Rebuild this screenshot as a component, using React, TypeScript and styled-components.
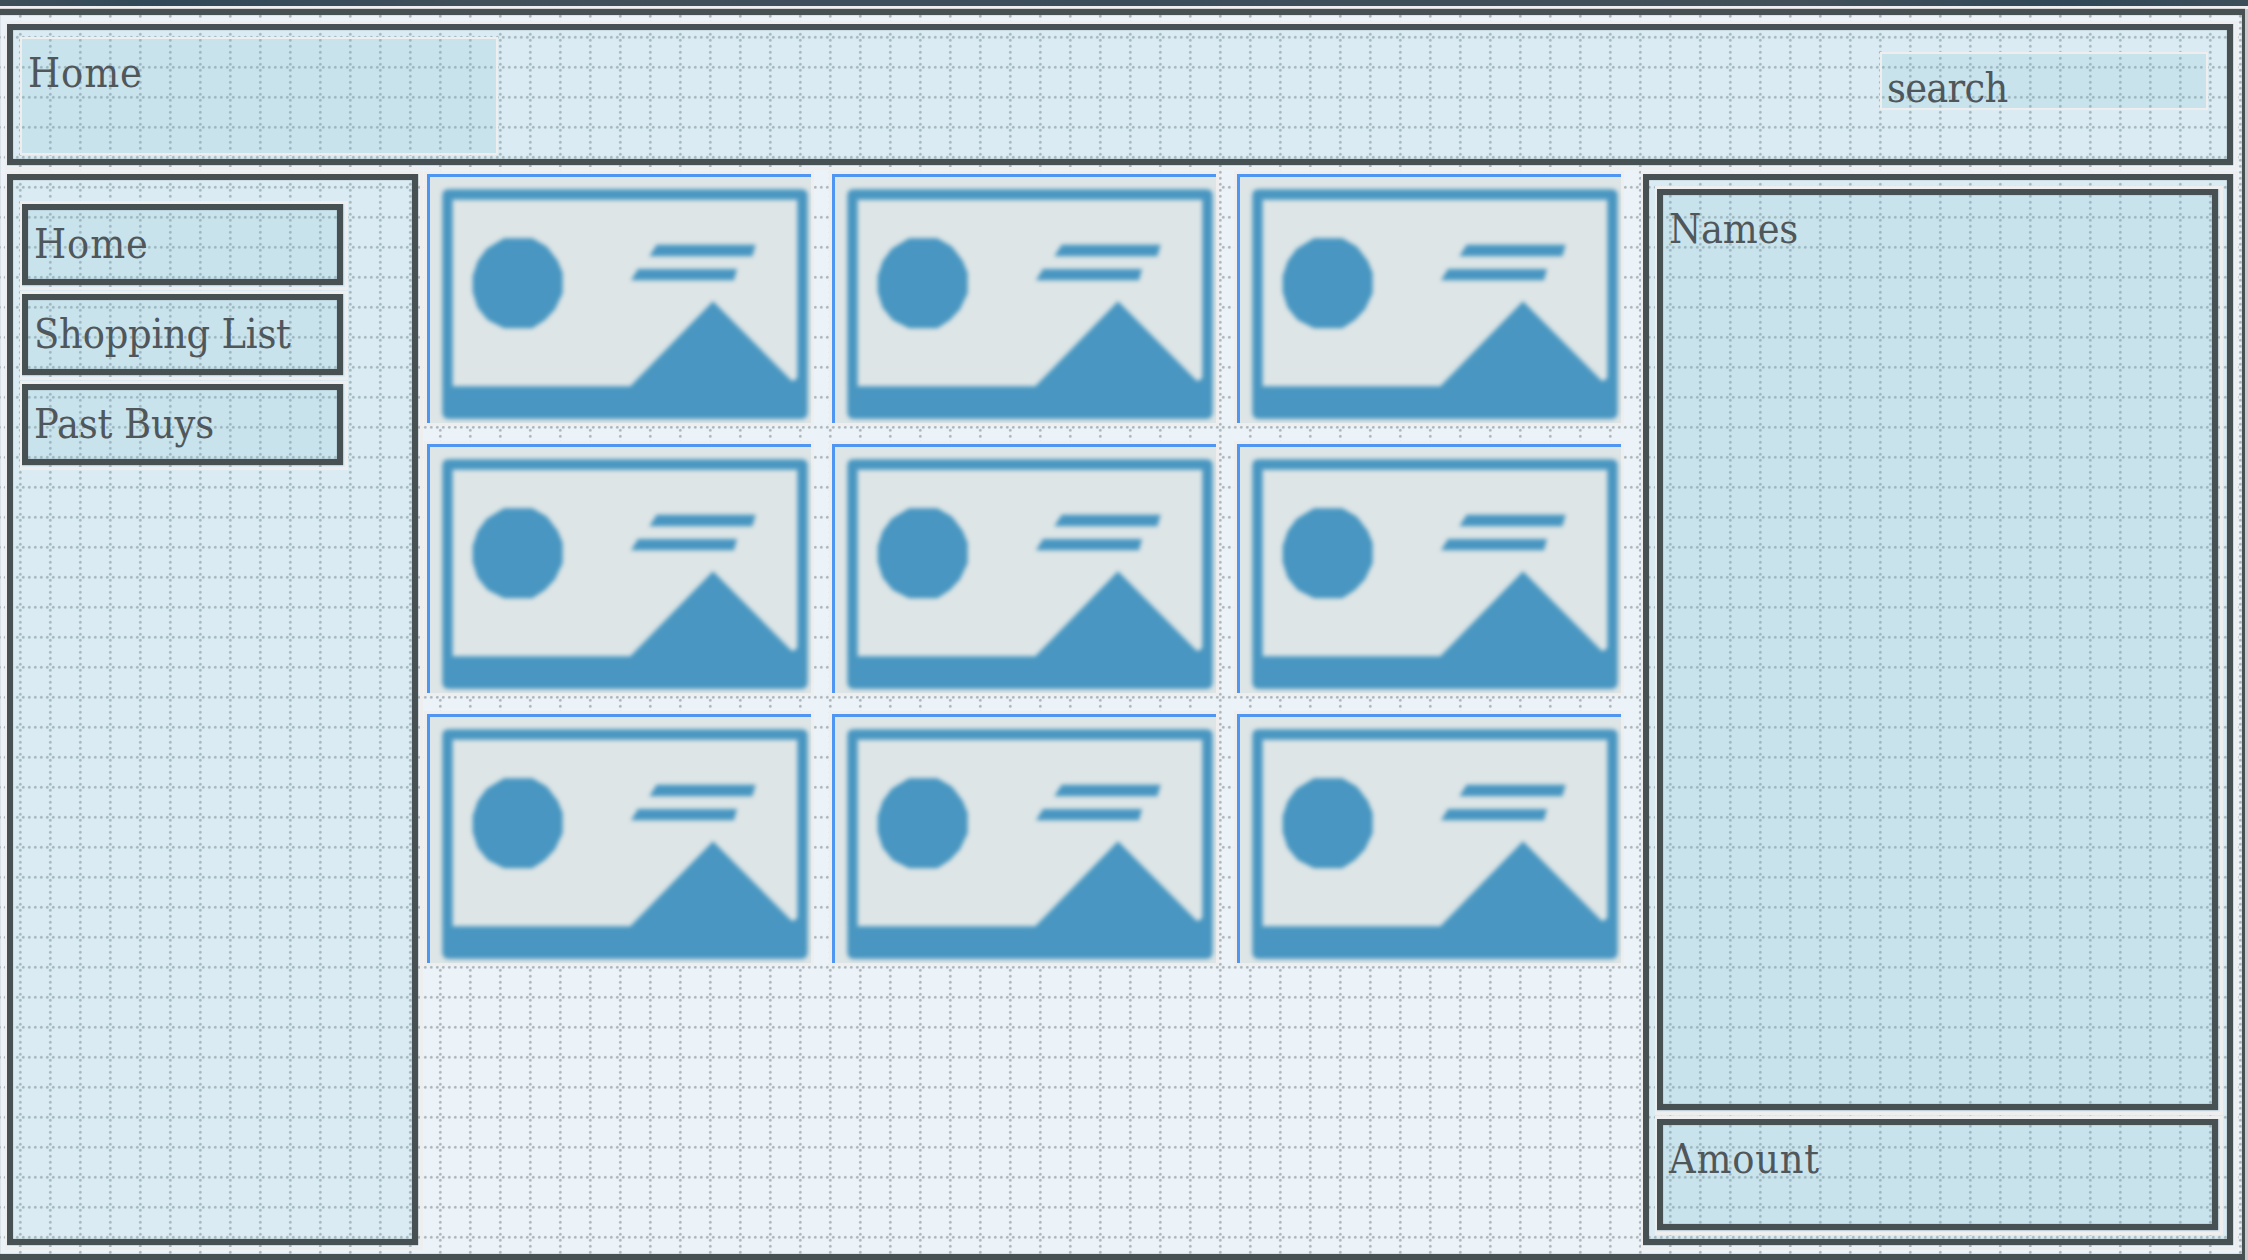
import React from "react";
import styled, { createGlobalStyle, css } from "styled-components";

const ink = "#475052";
const halo = "#eeeeee";
const panelTint = "rgba(118, 192, 208, 0.15)";
const boxTint = "rgba(108, 181, 206, 0.15)";

const GlobalStyle = createGlobalStyle`
  *, *::before, *::after { box-sizing: border-box; }
  body { margin: 0; overflow: hidden; }
`;

const dottedGrid = css`
  background-color: #ebf3f9;
  background-image:
    radial-gradient(circle at 3.3px 15.3px, #adb5ba 0, #b0b8bd 0.8px, rgba(176, 184, 189, 0) 2px),
    radial-gradient(circle at 15.3px 3.3px, #adb5ba 0, #b0b8bd 0.8px, rgba(176, 184, 189, 0) 2px);
  background-size: 6px 30px, 30px 6px;
  background-position: 2px -8px, 5px 1px;
`;

const Page = styled.div`
  width: 2248px;
  height: 1260px;
  display: flex;
  flex-direction: column;
  overflow: hidden;
  color: #50575b;
  font-family: "DejaVu Serif Condensed", "DejaVu Serif", serif;
  font-stretch: condensed;
  font-size: 41px;
  line-height: 48px;
  ${dottedGrid}
`;

const TopBar = styled.div`
  flex: none;
  height: 9px;
  border-bottom: 3px solid #f0eef1;
  background: linear-gradient(90deg, #3f4f58, #304858 7%, #42505a 22%, #3c4d5a 50%, #425059 80%, #304858 92%, #3d4e59);
`;

const Frame = styled.main`
  flex: 1;
  display: flex;
  flex-direction: column;
  gap: 9px;
  width: 2245px;
  padding: 9px 9px 9px 7px;
  border: solid ${ink};
  border-width: 6px 3px 6px 0;
  box-shadow: 3px 0 0 #c9c8cc, 0 0 1px ${ink}, inset 0 0 1px ${ink};
`;

const outlined = css`
  position: relative;
  border: 6px solid ${ink};
  box-shadow: 0 0 1px ${ink}, inset 0 0 1px ${ink};
  &::before {
    content: "";
    position: absolute;
    inset: -9px -11px -11px -8px;
    border: solid ${halo};
    border-width: 3px 3px 3px 2px;
    pointer-events: none;
  }
`;

const Header = styled.header`
  ${outlined}
  flex: none;
  display: flex;
  justify-content: space-between;
  align-items: flex-start;
  height: 141px;
  padding: 7px 19px 0 7px;
  background: ${panelTint};
`;

const Field = styled.div<{ $w: number; $h: number; $top?: number; $pad: string }>`
  width: ${(p) => p.$w}px;
  height: ${(p) => p.$h}px;
  margin-top: ${(p) => p.$top ?? 0}px;
  padding: ${(p) => p.$pad};
  border: 2px solid ${halo};
  background: ${boxTint};
  background-clip: padding-box;
`;

const Body = styled.div`
  flex: 1;
  display: grid;
  grid-template-columns: 411px 1fr 590px;
  gap: 9px;
  min-height: 0;
`;

const Panel = styled.section<{ $pad: string }>`
  ${outlined}
  display: flex;
  flex-direction: column;
  gap: 9px;
  padding: ${(p) => p.$pad};
  background: ${panelTint};
`;

const Box = styled.div<{ $w: number; $h: number }>`
  ${outlined}
  flex: none;
  width: ${(p) => p.$w}px;
  height: ${(p) => p.$h}px;
  padding: 10px 0 0 6px;
  white-space: nowrap;
  background: ${boxTint};
`;

const Label = styled.span<{ $track?: number }>`
  letter-spacing: ${(p) => p.$track ?? 0}px;
`;

const Gallery = styled.section`
  display: grid;
  grid-template-columns: repeat(3, 384px);
  grid-auto-rows: 249px;
  gap: 21px;
  align-content: start;
`;

const Card = styled.article`
  background: #dde5e6;
  border: solid #4f95f2;
  border-width: 3px 0 0 3px;
  box-shadow: 0 0 0 3px ${halo};
`;

const Art = styled.svg`
  display: block;
  width: 381px;
  height: 246px;
  filter: blur(2.1px);
`;

const Picture = () => (
  <Art viewBox="61 51 1143 738" preserveAspectRatio="none" fill="#4896c1" aria-hidden="true">
    <path
      fillRule="evenodd"
      d="M117 88H1175Q1194 88 1194 107V757Q1194 777 1175 777H117Q98 777 98 757V107Q98 88 117 88ZM129 119V679H662L910 424L1146 662Q1156 664 1163 652V119Z"
    />
    <path d="M283 235H368L412 260L444 302L459 339V399L436 448L406 480L368 505H283L234 480L204 443L189 396V348L204 303L231 266Z" />
    <path d="M741 254H1038L1028 289H719Z" />
    <path d="M685 327H982L973 361H664Z" />
  </Art>
);

const links = [
  { text: "Home", track: 0.9 },
  { text: "Shopping List", track: -0.2 },
  { text: "Past Buys", track: -0.1 },
];

export default function App() {
  return (
    <>
      <GlobalStyle />
      <Page>
        <TopBar />
        <Frame>
          <Header>
            <Field $w={478} $h={118} $pad="10px 6px">
              <Label $track={0.9}>Home</Label>
            </Field>
            <Field $w={328} $h={58} $top={15} $pad="10px 5px 0">
              <Label $track={-0.7}>search</Label>
            </Field>
          </Header>
          <Body>
            <Panel $pad="24px 9px">
              {links.map((l) => (
                <Box key={l.text} $w={321} $h={81}>
                  <Label $track={l.track}>{l.text}</Label>
                </Box>
              ))}
            </Panel>
            <Gallery>
              {Array.from({ length: 9 }, (_, i) => (
                <Card key={i}>
                  <Picture />
                </Card>
              ))}
            </Gallery>
            <Panel $pad="9px 8px">
              <Box $w={561} $h={921}>
                <Label $track={-0.2}>Names</Label>
              </Box>
              <Box $w={561} $h={111}>
                <Label $track={0.8}>Amount</Label>
              </Box>
            </Panel>
          </Body>
        </Frame>
      </Page>
    </>
  );
}
